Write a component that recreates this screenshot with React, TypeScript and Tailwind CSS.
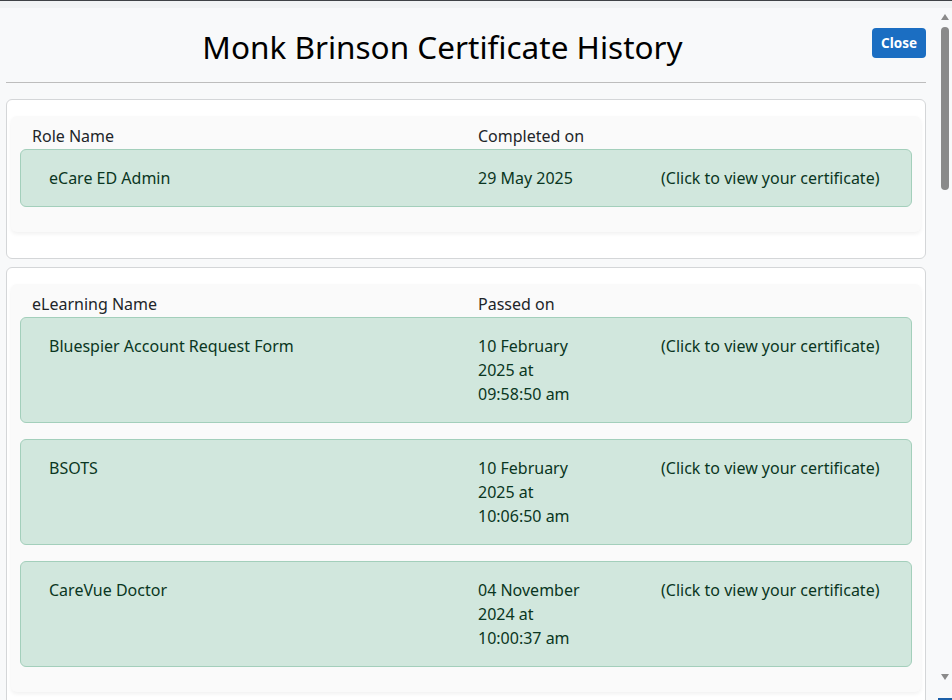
import React from 'react'

type Cert = {
  name: string
  date: string
}

const roles: Cert[] = [{ name: 'eCare ED Admin', date: '29 May 2025' }]

const elearnings: Cert[] = [
  { name: 'Bluespier Account Request Form', date: '10 February 2025 at 09:58:50 am' },
  { name: 'BSOTS', date: '10 February 2025 at 10:06:50 am' },
  { name: 'CareVue Doctor', date: '04 November 2024 at 10:00:37 am' },
]

function CertRow({ item }: { item: Cert }) {
  return (
    <div className="flex rounded-md border border-[#a3cfbb] bg-[#d1e7dd] px-[28px] py-4 text-[#0a3622] cursor-pointer">
      <div className="w-[429px] shrink-0">{item.name}</div>
      <div className="w-[183px] shrink-0 pr-[68px]">{item.date}</div>
      <div className="flex-1 whitespace-nowrap">(Click to view your certificate)</div>
    </div>
  )
}

function CertSection({ nameLabel, dateLabel, items }: { nameLabel: string; dateLabel: string; items: Cert[] }) {
  return (
    <div className="rounded-md border border-[#d4d6d8] bg-white px-1 pt-4 pb-[26px]">
      <div className="rounded-md bg-[#fafafa] px-[9px] pt-2 pb-[25px] shadow-[0_2px_4px_rgba(0,0,0,0.06)]">
        <div className="flex pl-[12px] text-[#212529]">
          <div className="w-[446px] shrink-0">{nameLabel}</div>
          <div>{dateLabel}</div>
        </div>
        <div className="flex flex-col gap-4 pt-px">
          {items.map(item => (
            <CertRow key={item.name} item={item} />
          ))}
        </div>
      </div>
    </div>
  )
}

export default function App() {
  return (
    <div
      className="flex h-[700px] flex-col overflow-hidden bg-[#f8f9fa] text-[16px] leading-6"
      style={{ fontFamily: '"Noto Sans", "Open Sans", sans-serif' }}
    >
      {/* window edge */}
      <div className="h-px shrink-0 bg-[#3f4246]" />
      <div className="h-[7px] shrink-0 bg-[#f1f3f4]" />

      <div className="flex min-h-0 flex-1">
        {/* modal content */}
        <div className="flex min-w-0 flex-1 flex-col pl-[6px] pr-[12px]">
          <div className="flex items-start border-b border-[#bdbdbd] pb-[13px]">
            <h1 className="flex-1 pl-[7px] pt-[17px] text-center text-[31.5px] leading-[44px] text-black">
              Monk Brinson Certificate History
            </h1>
            <button className="mt-[20px] rounded bg-[#1b6ec2] px-[9px] py-[5px] text-[13.5px] font-bold leading-5 text-white">
              Close
            </button>
          </div>

          <div className="flex flex-col gap-2 pt-4">
            <CertSection nameLabel="Role Name" dateLabel="Completed on" items={roles} />
            <CertSection nameLabel="eLearning Name" dateLabel="Passed on" items={elearnings} />
          </div>
        </div>

        {/* scrollbar */}
        <div className="flex w-[14px] shrink-0 flex-col items-center bg-[#f8f9fa] pt-[6px]">
          <svg width="8" height="6" viewBox="0 0 8 6" className="fill-[#8a8a8a]">
            <path d="M4 0 L8 6 L0 6 Z" />
          </svg>
          <div className="mt-[7px] h-[163px] w-[8px] rounded-full bg-[#8a8a8a]" />
          <div className="flex-1" />
          <svg width="8" height="6" viewBox="0 0 8 6" className="mb-[18px] fill-[#8a8a8a]">
            <path d="M0 0 L8 0 L4 6 Z" />
          </svg>
          <div className="h-[2px] w-full bg-[#1b5fa8]" />
        </div>
      </div>
    </div>
  )
}
